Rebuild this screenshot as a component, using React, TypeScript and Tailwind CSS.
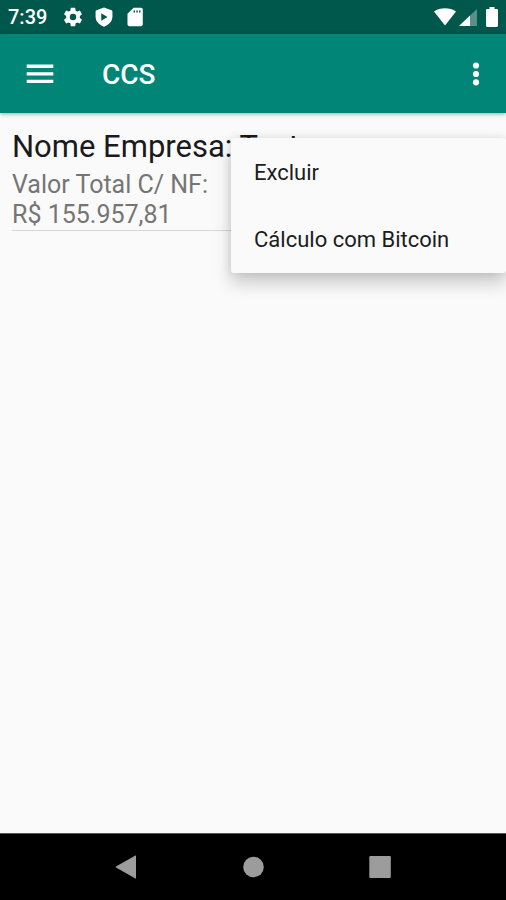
import React, { useState } from "react";

interface Company {
  name: string;
  total: string;
}

const companies: Company[] = [{ name: "Teste", total: "R$ 155.957,81" }];

const menuItems = ["Excluir", "Cálculo com Bitcoin"];

function StatusBar() {
  return (
    <div className="flex h-[34px] items-center justify-between bg-[#00574b] px-2 text-white">
      <div className="flex items-center">
        <span className="w-[54px] text-[20px] font-medium leading-[36px]">7:39</span>
        <svg className="h-[22px] w-[22px]" viewBox="0 0 24 24" fill="currentColor" aria-hidden="true">
          <path d="M19.43 12.98c.04-.32.07-.64.07-.98s-.03-.66-.07-.98l2.11-1.65c.19-.15.24-.42.12-.64l-2-3.46c-.12-.22-.39-.3-.61-.22l-2.49 1c-.52-.4-1.08-.73-1.69-.98l-.38-2.65A.49.49 0 0 0 14 2h-4c-.25 0-.46.18-.49.42l-.38 2.65c-.61.25-1.17.59-1.69.98l-2.49-1c-.23-.09-.49 0-.61.22l-2 3.46c-.13.22-.07.49.12.64l2.11 1.65c-.04.32-.07.65-.07.98s.03.66.07.98l-2.11 1.65c-.19.15-.24.42-.12.64l2 3.46c.12.22.39.3.61.22l2.49-1c.52.4 1.08.73 1.69.98l.38 2.65c.03.24.24.42.49.42h4c.25 0 .46-.18.49-.42l.38-2.65c.61-.25 1.17-.59 1.69-.98l2.49 1c.23.09.49 0 .61-.22l2-3.46c.12-.22.07-.49-.12-.64l-2.11-1.65zM12 15.5a3.5 3.5 0 1 1 0-7 3.5 3.5 0 0 1 0 7z" />
        </svg>
        <svg className="ml-[9px] h-[22px] w-[22px]" viewBox="0 0 24 24" fill="currentColor" aria-hidden="true">
          <path fillRule="evenodd" d="M12 1.500L20.300 4.700Q21.200 5.100 21.200 6v5.500c0 5.300-3.900 9.300-9.200 11-5.300-1.700-9.200-5.700-9.200-11V6Q2.800 5.100 3.700 4.700zM9 7.800v8.400l6.800-4.200z" />
        </svg>
        <svg className="ml-[9px] h-[22px] w-[22px]" viewBox="0 0 24 24" fill="currentColor" aria-hidden="true">
          <path d="M18.500 2h-8L3.800 8.500V20c0 1.100.9 2 2 2h12.700c1.100 0 2-.9 2-2V4c0-1.100-.9-2-2-2zM12 7h-1.600V5H12zm3 0h-1.600V5H15zm3 0h-1.600V5H18z" />
        </svg>
      </div>
      <div className="flex items-center">
        <svg className="h-[20px] w-[22px]" viewBox="0 0 22 20" fill="currentColor" aria-hidden="true">
          <path d="M0 4.500C6 .2 16 .2 22 4.500L11 18.500z" />
        </svg>
        <svg className="ml-[3px] h-[20px] w-[18px]" viewBox="0 0 18 20" fill="currentColor" aria-hidden="true">
          <path d="M18 2v17H0z" opacity="0.35" />
          <path d="M11 8.500V19H0z" />
        </svg>
        <svg className="ml-[9px] h-[20px] w-[12px]" viewBox="0 0 12 20" fill="currentColor" aria-hidden="true">
          <path d="M8.500 2V0h-5v2H1.200C.5 2 0 2.500 0 3.200v15.600C0 19.500.5 20 1.200 20h9.600c.7 0 1.200-.5 1.200-1.200V3.200C12 2.500 11.500 2 10.800 2z" />
        </svg>
      </div>
    </div>
  );
}

function AppBar({ onToggleMenu }: { onToggleMenu: () => void }) {
  return (
    <header className="relative flex h-[79px] items-center bg-[#008577] text-white shadow-[0_1px_4px_rgba(0,0,0,0.35)]">
      <button type="button" aria-label="Menu" className="ml-[22px] h-9 w-9">
        <svg className="h-9 w-9" viewBox="0 0 36 36" fill="currentColor">
          <path d="M4.700 8.500h26.600v3.400h-26.600zM4.700 16.200h26.600v3.400h-26.600zM4.700 23.700h26.600v3.400h-26.600z" />
        </svg>
      </button>
      <h1 className="ml-11 flex-1 pt-0.5 text-[28px] font-medium leading-9">CCS</h1>
      <button type="button" aria-label="Mais opções" className="mr-3 h-9 w-9" onClick={onToggleMenu}>
        <svg className="h-9 w-9" viewBox="0 0 36 36" fill="currentColor">
          <circle cx="18" cy="9.500" r="3.100" />
          <circle cx="18" cy="18" r="3.100" />
          <circle cx="18" cy="26.300" r="3.100" />
        </svg>
      </button>
    </header>
  );
}

function OptionsMenu() {
  return (
    <ul
      role="menu"
      className="absolute right-0 top-[25px] w-[275px] rounded-[3px] bg-[#fafafa] pt-px shadow-[0_10px_18px_rgba(0,0,0,0.2),0_0_8px_rgba(0,0,0,0.1)]"
    >
      {menuItems.map((item) => (
        <li key={item} role="none">
          <button
            type="button"
            role="menuitem"
            className="block h-[67px] w-full px-[23px] text-left text-[22px] text-[#1c1c1c]"
          >
            {item}
          </button>
        </li>
      ))}
    </ul>
  );
}

function NavBar() {
  return (
    <nav className="flex h-[67px] items-center justify-center border-t border-[#555555] bg-black text-[#9c9c9c]">
      <button type="button" aria-label="Voltar" className="flex w-[127px] justify-center">
        <svg className="h-6 w-6" viewBox="0 0 24 24" fill="currentColor">
          <path d="M22 .7v22.600q0 .5-.6.200L2 12.500q-.7-.5 0-1L21.400.5q.6-.3.600.2z" />
        </svg>
      </button>
      <button type="button" aria-label="Início" className="flex w-[127px] justify-center">
        <svg className="h-6 w-6" viewBox="0 0 24 24" fill="currentColor">
          <circle cx="12.500" cy="12" r="10.300" />
        </svg>
      </button>
      <button type="button" aria-label="Recentes" className="flex w-[127px] justify-center">
        <svg className="h-6 w-6" viewBox="0 0 24 24" fill="currentColor">
          <rect x="1.300" y="1" width="21.500" height="22" rx="1.200" />
        </svg>
      </button>
    </nav>
  );
}

export default function App() {
  const [menuOpen, setMenuOpen] = useState(true);

  return (
    <div className="flex min-h-screen flex-col bg-[#fafafa] font-[Roboto,sans-serif]">
      <StatusBar />
      <AppBar onToggleMenu={() => setMenuOpen(!menuOpen)} />
      <main className="relative flex-1 px-3 pt-[15px]">
        <ul>
          {companies.map((company) => (
            <li key={company.name} className="border-b border-[#d6d6d6]">
              <h2 className="text-[31px] leading-[38px] text-[#1a1a1a]">Nome Empresa: {company.name}</h2>
              <p className="pt-1 text-[25px] leading-[30px] text-[#757575]">
                Valor Total C/ NF:
                <br />
                {company.total}
              </p>
            </li>
          ))}
        </ul>
        {menuOpen && <OptionsMenu />}
      </main>
      <NavBar />
    </div>
  );
}
